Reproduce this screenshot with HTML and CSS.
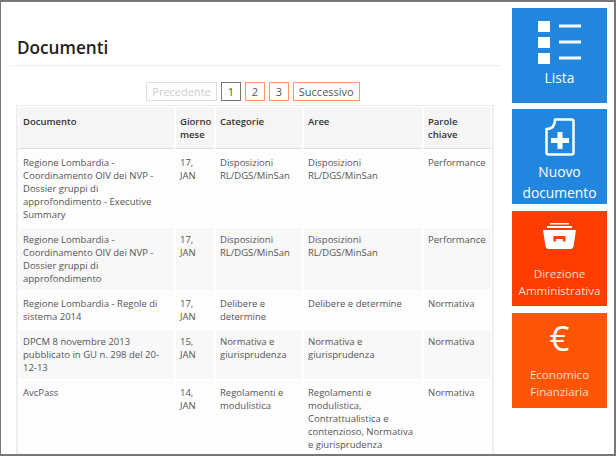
FILE: index.html
```html
<!DOCTYPE html>
<html lang="it">
	<head>
		<meta charset="utf-8">
		<title>Documenti</title>
		<link rel="stylesheet" href="styles.css">
	</head>
	<body>
		<div id="frame">
			<div id="main">
				<h1>Documenti</h1>
				<div class="pager">
					<a class="off">Precedente</a>
					<a class="current">1</a>
					<a>2</a>
					<a>3</a>
					<a>Successivo</a>
				</div>
				<table>
					<thead>
						<tr>
							<th class="c1">Documento</th>
							<th class="c2">Giorno mese</th>
							<th class="c3">Categorie</th>
							<th class="c4">Aree</th>
							<th class="c5">Parole chiave</th>
						</tr>
					</thead>
					<tbody>
						<tr>
							<td>Regione Lombardia - Coordinamento OIV dei NVP - Dossier gruppi di approfondimento - Executive Summary</td>
							<td>17, JAN</td>
							<td>Disposizioni RL/DGS/MinSan</td>
							<td>Disposizioni RL/DGS/MinSan</td>
							<td>Performance</td>
						</tr>
						<tr>
							<td>Regione Lombardia - Coordinamento OIV dei NVP - Dossier gruppi di approfondimento</td>
							<td>17, JAN</td>
							<td>Disposizioni RL/DGS/MinSan</td>
							<td>Disposizioni RL/DGS/MinSan</td>
							<td>Performance</td>
						</tr>
						<tr>
							<td>Regione Lombardia - Regole di sistema 2014</td>
							<td>17, JAN</td>
							<td>Delibere e determine</td>
							<td>Delibere e determine</td>
							<td>Normativa</td>
						</tr>
						<tr>
							<td>DPCM 8 novembre 2013 pubblicato in GU n. 298 del 20-12-13</td>
							<td>15, JAN</td>
							<td>Normativa e giurisprudenza</td>
							<td>Normativa e giurisprudenza</td>
							<td>Normativa</td>
						</tr>
						<tr>
							<td>AvcPass</td>
							<td>14, JAN</td>
							<td>Regolamenti e modulistica</td>
							<td>Regolamenti e modulistica, Contrattualistica e contenzioso, Normativa e giurisprudenza</td>
							<td>Normativa</td>
						</tr>
					</tbody>
				</table>
			</div>
			<div id="side">
				<a class="tile blue lista">
					<svg class="icon" width="44" height="44" viewBox="0 0 44 44" aria-hidden="true">
						<path fill="#fff" d="M0 0h12v11H0zM0 16h12v11H0zM0 32h12v11H0zM21 3.500h22v3H21zM21 19.500h22v3H21zM21 35.500h22v3H21z"/>
					</svg>
					<span class="big">Lista</span>
				</a>
				<a class="tile blue nuovo">
					<svg class="icon" width="30" height="38" viewBox="0 0 30 38" aria-hidden="true">
						<path fill="none" stroke="#fff" stroke-width="2.500" stroke-linejoin="round" d="M10 1.500h16.500a2 2 0 0 1 2 2v31a2 2 0 0 1-2 2h-23a2 2 0 0 1-2-2V11c5 0 8.500-3 8.500-9.500z"/>
						<path fill="#fff" d="M12.500 14h5v6h6.500v5h-6.500v6h-5v-6H6v-5h6.500z"/>
					</svg>
					<span class="big">Nuovo documento</span>
				</a>
				<a class="tile red">
					<svg class="icon" width="33" height="26" viewBox="0 0 33 26" aria-hidden="true">
						<path fill="#fff" d="M7 0h19v1.500H7zM4 3h25v2H4zM0 7h33l-2.500 16.500a3 3 0 0 1-3 2.500h-22a3 3 0 0 1-3-2.500z"/>
						<path fill="#ff3d00" d="M10.500 13h12v5.500h-2.500V16h-7v2.500h-2.500z"/>
					</svg>
					<span>Direzione Amministrativa</span>
				</a>
				<a class="tile orange">
					<span class="euro">€</span>
					<span>Economico Finanziaria</span>
				</a>
			</div>
		</div>
	</body>
</html>
```

FILE: styles.css
```css
html, body
{
	margin: 0;
	padding: 0;
}

body
{
	font-family: "Open Sans", sans-serif;
	color: #555;
	background: #fff;
}

#frame
{
	box-sizing: border-box;
	width: 616px;
	height: 456px;
	overflow: hidden;
	display: flex;
	border: solid #777;
	border-width: 2px 2px 2px 1px;
}

#main
{
	width: 492px;
	flex: none;
	margin-left: 8px;
}

h1
{
	margin: 0;
	padding: 35px 8px 6px;
	font-size: 17.200px;
	line-height: 22px;
	font-weight: 600;
	color: #222;
	border-bottom: 1px solid #eee;
}

.pager
{
	display: flex;
	justify-content: center;
	gap: 4px;
	margin: 16px 0 4px;
	padding-right: 4px;
}

.pager a
{
	box-sizing: border-box;
	height: 19px;
	line-height: 17px;
	padding: 0 5px;
	min-width: 20px;
	text-align: center;
	font-size: 11px;
	border: 1px solid #f59a6a;
	color: #555;
}

.pager .off
{
	border: 1px solid #ddd;
	color: #ccc;
}

.pager .current
{
	border: 1px solid #777;
}

table
{
	table-layout: fixed;
	width: 478px;
	margin-left: 7px;
	border: 2px solid #eee;
	border-top-width: 1px;
	border-spacing: 1px;
	border-collapse: separate;
	font-size: 9.500px;
	line-height: 13px;
}

.c1 { width: 155px; }
.c2 { width: 39px; }
.c3 { width: 87px; }
.c4 { width: 119px; }
.c5 { width: 68px; }

th, td
{
	box-sizing: border-box;
	vertical-align: top;
	text-align: left;
}

th
{
	background: #f5f5f5;
	color: #333;
	font-weight: 600;
	padding: 8px 4px 7px;
	border-bottom: 1px solid #ddd;
}

td
{
	padding: 5px 4px;
	border-top: 1px solid #fff;
}

th + th, td + td
{
	border-left: 1px solid #fff;
}

tbody tr:nth-child(odd) td
{
	background: #fdfdfd;
}

tbody tr:nth-child(even) td
{
	background: #f8f8f8;
}

#side
{
	width: 95px;
	flex: none;
	margin-left: 11px;
	padding-top: 6px;
	display: flex;
	flex-direction: column;
	gap: 6px;
}

.tile
{
	box-sizing: border-box;
	height: 95px;
	flex: none;
	display: flex;
	flex-direction: column;
	align-items: center;
	text-align: center;
	color: #ffdccd;
	font-size: 11.600px;
	font-weight: 400;
	line-height: 17px;
	padding-top: 12px;
}

.tile .icon
{
	display: block;
	margin-bottom: 16px;
}

.tile .big
{
	color: #fff;
	font-size: 13.800px;
	line-height: 21px;
}

.lista
{
	padding-top: 13px;
}

.lista .icon
{
	margin-bottom: 2px;
}

.nuovo
{
	padding-top: 9px;
}

.nuovo .icon
{
	margin-bottom: 5px;
}

.blue
{
	background: #2186de;
}

.red
{
	background: #ff3d00;
	margin-top: 1px;
}

.orange
{
	background: #ff5505;
	margin-top: 1px;
	padding-top: 3px;
}

.euro
{
	color: #fff;
	font-size: 35px;
	font-weight: 400;
	line-height: 44px;
	margin-bottom: 6px;
}
```
